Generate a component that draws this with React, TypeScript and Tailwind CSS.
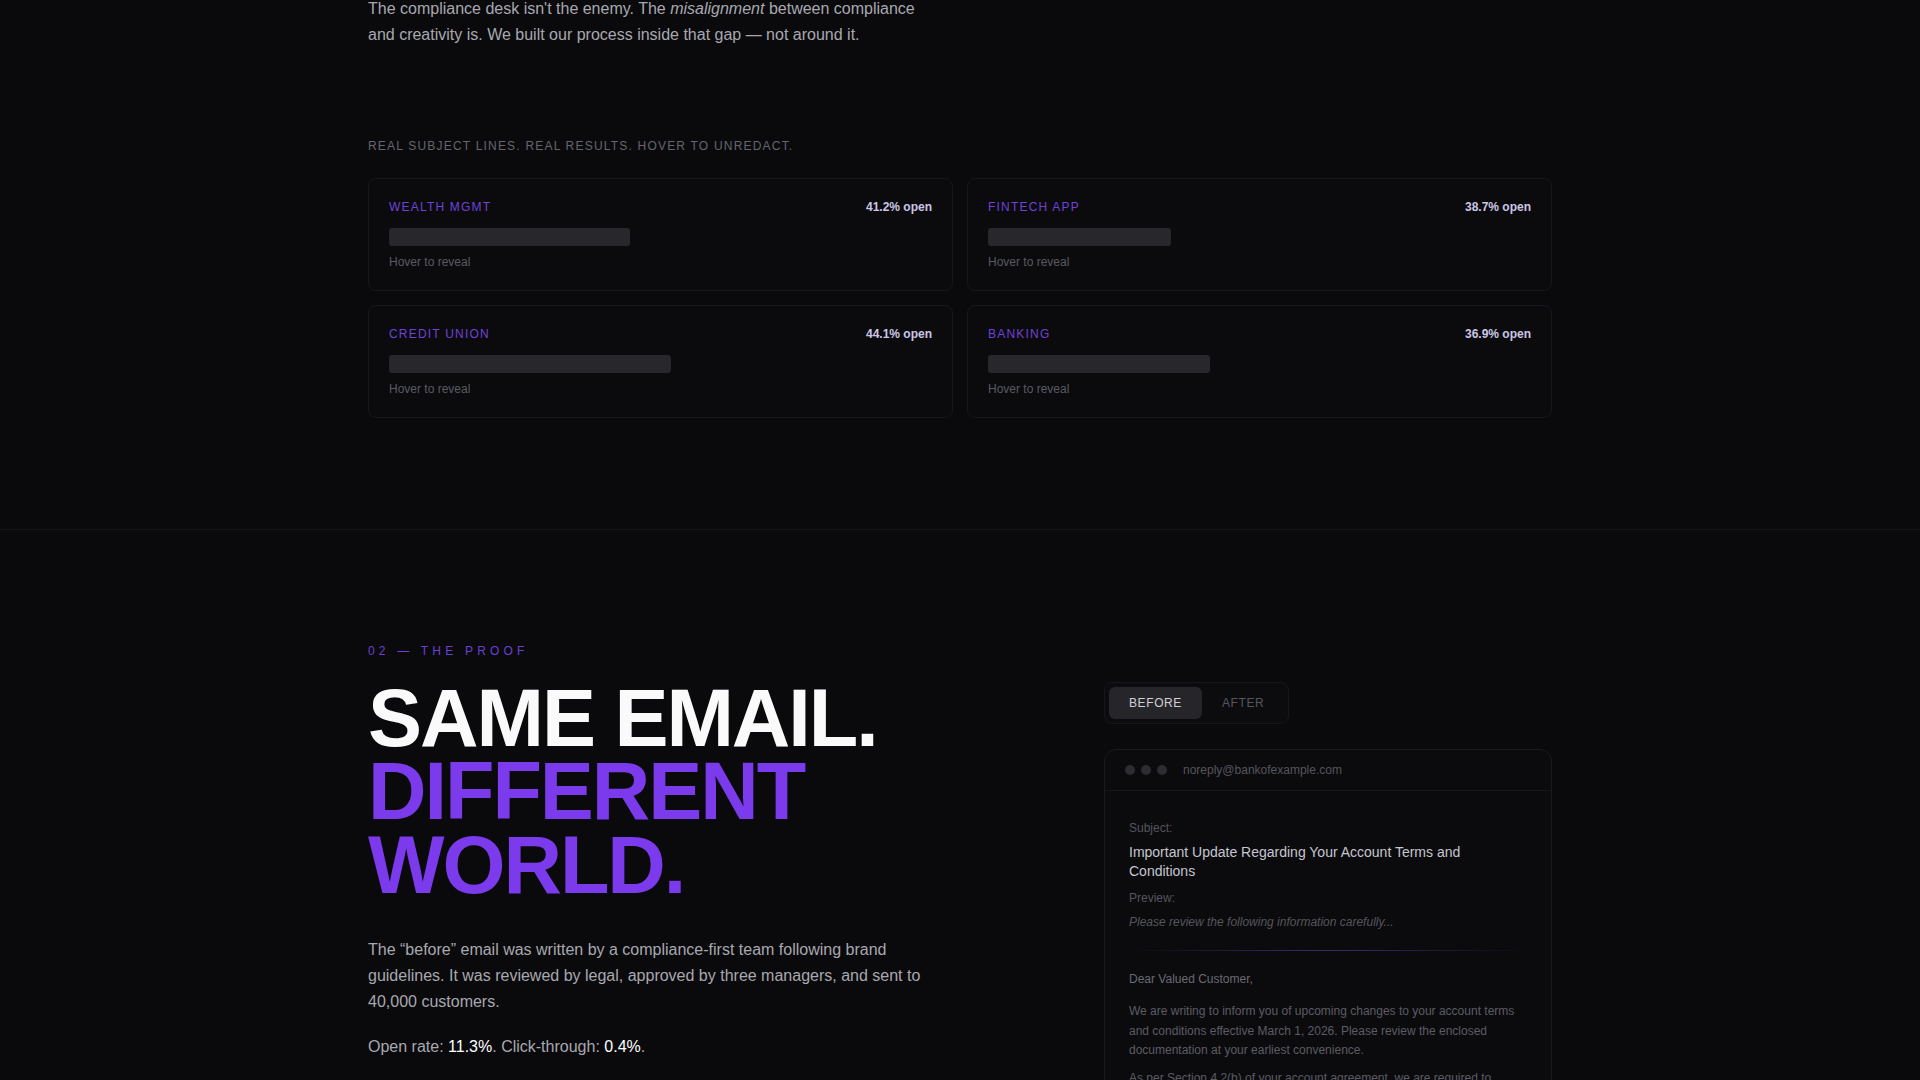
import React from "react";

const cards = [
  { label: "WEALTH MGMT", rate: "41.2% open", bar: 241 },
  { label: "FINTECH APP", rate: "38.7% open", bar: 183 },
  { label: "CREDIT UNION", rate: "44.1% open", bar: 282 },
  { label: "BANKING", rate: "36.9% open", bar: 222 },
];

export default function App() {
  return (
    <div
      className="min-h-screen bg-[#0a0a0c] text-[#a1a1aa] overflow-hidden"
      style={{ fontFamily: '"Liberation Sans", Arial, sans-serif' }}
    >
      <section className="mx-auto max-w-7xl px-12 -mt-[4px] pb-[111px]">
        <p className="max-w-xl text-base leading-relaxed text-[#a8a8b0]">
          The compliance desk isn&apos;t the enemy. The <em>misalignment</em> between
          compliance and creativity is. We built our process inside that gap — not around it.
        </p>

        <p className="mt-[90px] mb-6 text-xs uppercase tracking-[0.1em] text-[#66666e]">
          Real subject lines. Real results. Hover to unredact.
        </p>

        <div className="grid grid-cols-2 gap-3.5">
          {cards.map((c) => (
            <div
              key={c.label}
              className="rounded-lg border border-[#16161d] bg-[#0b0b0e] p-5"
            >
              <div className="flex items-center justify-between">
                <span className="text-xs tracking-[0.1em] text-[#6f42d8]">{c.label}</span>
                <span className="text-xs font-bold text-[#cbc6e6]">{c.rate}</span>
              </div>
              <div
                className="mt-[13px] h-[18px] rounded-[3px] bg-[#28282c]"
                style={{ width: c.bar }}
              />
              <p className="mt-2 text-xs text-[#5a5a62]">Hover to reveal</p>
            </div>
          ))}
        </div>
      </section>

      <section className="border-t border-[#141419] pt-[113px]">
        <div className="mx-auto max-w-7xl px-12">
          <p className="mb-[23px] text-xs tracking-[0.35em] text-[#6d3fd6]">02 — THE PROOF</p>

          <div className="flex items-start justify-between">
            <div className="max-w-xl">
              <h2 className="text-[81px] font-bold leading-[0.907] tracking-[-0.025em] text-[#fafafa]">
                <span className="block">SAME EMAIL.</span>
                <span className="block text-[#7c3aed]">DIFFERENT</span>
                <span className="block text-[#7c3aed]">WORLD.</span>
              </h2>

              <p className="mt-[35px] text-base leading-relaxed text-[#a8a8b0]">
                The “before” email was written by a compliance-first team following brand guidelines. It was
                reviewed by legal, approved by three managers, and sent to 40,000 customers.
              </p>
              <p className="mt-[19px] text-base leading-relaxed text-[#a8a8b0]">
                Open rate: <span className="text-white">11.3%</span>. Click-through:{" "}
                <span className="text-white">0.4%</span>.
              </p>
            </div>

            <div className="w-full max-w-md">
              <div className="inline-flex rounded-lg border border-[#16161c] bg-[#0c0c0f] p-1">
                <button className="rounded-md bg-[#26262a] px-5 py-2 text-xs tracking-[0.05em] text-[#cfcfd4]">
                  BEFORE
                </button>
                <button className="px-5 py-2 text-xs tracking-[0.05em] text-[#55555c]">AFTER</button>
              </div>

              <div className="mt-[25px] rounded-xl border border-[#1a1a20] bg-[#0b0b0e]">
                <div className="flex h-[41px] items-center border-b border-[#16161b] px-5">
                  <div className="flex gap-1.5">
                    <span className="h-2.5 w-2.5 rounded-full bg-[#2c2c31]" />
                    <span className="h-2.5 w-2.5 rounded-full bg-[#2c2c31]" />
                    <span className="h-2.5 w-2.5 rounded-full bg-[#2c2c31]" />
                  </div>
                  <span className="ml-4 text-xs text-[#55555c]">noreply@bankofexample.com</span>
                </div>

                <div className="px-6 pt-[29px] pb-6">
                  <p className="text-xs text-[#55555c]">Subject:</p>
                  <p className="mt-[7px] text-sm leading-snug text-[#c6c6ce]">
                    Important Update Regarding Your Account Terms and Conditions
                  </p>
                  <p className="mt-2 text-xs text-[#55555c]">Preview:</p>
                  <p className="mt-2 text-xs italic text-[#55555c]">
                    Please review the following information carefully...
                  </p>

                  <div className="mt-5 mb-[19px] h-px bg-gradient-to-r from-transparent via-[#3b2a6e] to-transparent" />

                  <div className="text-xs leading-relaxed">
                    <p className="mb-[13px] text-[#6a6a72]">Dear Valued Customer,</p>
                    <p className="mb-2 text-[#5c5c64]">
                      We are writing to inform you of upcoming changes to your account terms and conditions
                      effective March 1, 2026. Please review the enclosed documentation at your earliest
                      convenience.
                    </p>
                    <p className="text-[#5c5c64]">
                      As per Section 4.2(b) of your account agreement, we are required to communicate any
                      material changes to the terms governing your account.
                    </p>
                  </div>
                </div>
              </div>
            </div>
          </div>
        </div>
      </section>
    </div>
  );
}
